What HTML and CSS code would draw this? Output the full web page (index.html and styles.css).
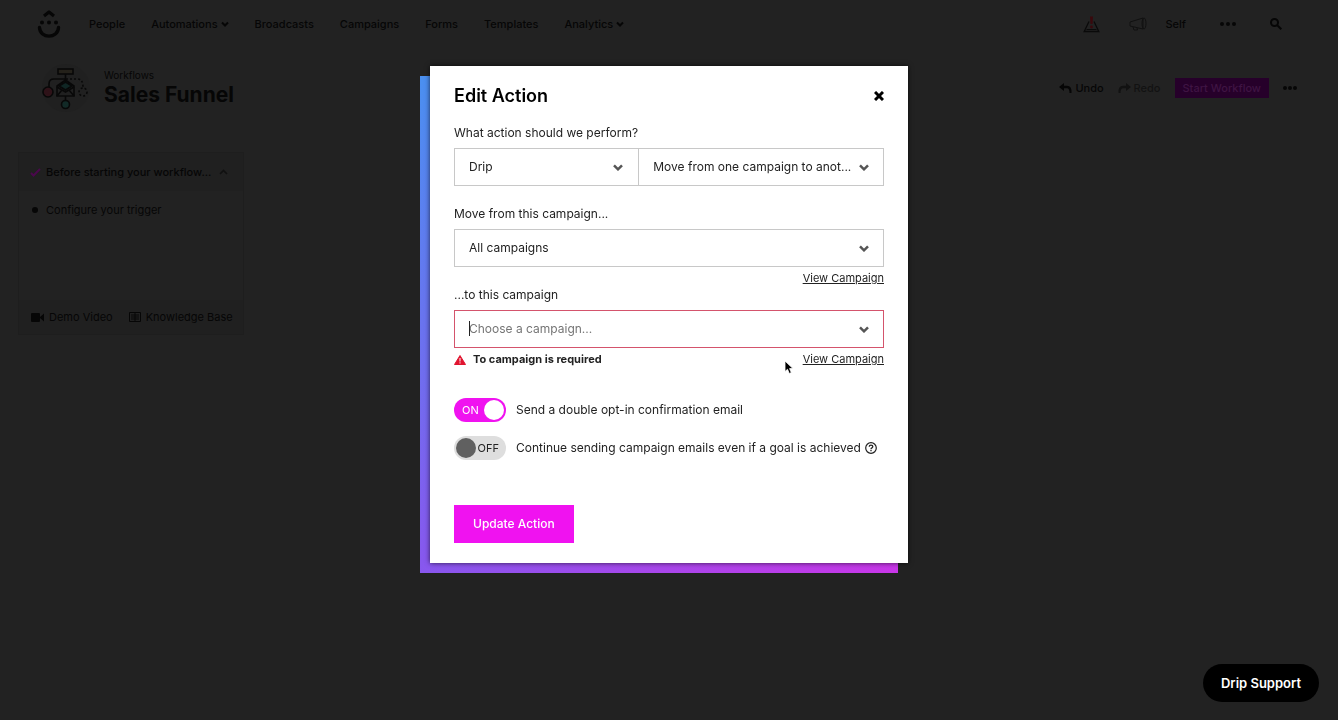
FILE: index.html
```html
<!DOCTYPE html>
<html lang="en">
<head>
    <meta charset="UTF-8">
    <meta name="viewport" content="width=device-width, initial-scale=1.0">
    <title>Sales Funnel - Workflows</title>
    <link rel="stylesheet" href="styles.css">
</head>
<body>
    <!-- Top navigation -->
    <header class="navbar">
        <a href="#" class="logo" aria-label="Home">
            <svg width="24" height="30" viewBox="0 0 24 30" fill="none" stroke="currentColor">
                <path d="M7 7 L12 3 L17 7" stroke-width="3.2" stroke-linejoin="round"/>
                <path d="M2.500 18.500 C3 30 21 30 21.500 18.500" stroke-width="3.400" stroke-linecap="round"/>
                <g fill="currentColor" stroke="none">
                    <circle cx="5" cy="13.500" r="2"/>
                    <circle cx="12" cy="13.500" r="2"/>
                    <circle cx="19" cy="13.500" r="2"/>
                </g>
            </svg>
        </a>
        <nav class="nav-links">
            <a href="#">People</a>
            <a href="#">Automations
                <svg width="8" height="6" viewBox="0 0 8 6"><path d="M1 1.500 L4 4.500 L7 1.500" fill="none" stroke="currentColor" stroke-width="2"/></svg>
            </a>
            <a href="#">Broadcasts</a>
            <a href="#">Campaigns</a>
            <a href="#">Forms</a>
            <a href="#">Templates</a>
            <a href="#">Analytics
                <svg width="8" height="6" viewBox="0 0 8 6"><path d="M1 1.500 L4 4.500 L7 1.500" fill="none" stroke="currentColor" stroke-width="2"/></svg>
            </a>
        </nav>
        <div class="nav-tools">
            <button class="icon-btn" aria-label="Alerts">
                <svg width="17" height="17" viewBox="0 0 17 17" fill="none">
                    <path d="M6 5.500 L1.200 15.500 H15.800 L11 5.500" stroke="#0a0a0a" stroke-width="1.300"/>
                    <path d="M3.500 13.500 H13.500" stroke="#0a0a0a"/>
                    <path d="M7 0.500 H10 L9.500 8 H7.500 Z" fill="#3a080c"/>
                    <circle cx="8.500" cy="11" r="1.400" fill="#3a080c"/>
                </svg>
            </button>
            <button class="icon-btn announce" aria-label="Announcements">
                <svg width="18" height="14" viewBox="0 0 18 14" fill="none" stroke="currentColor">
                    <path d="M1 5 L14 1 V12 L1 9 Z M4 10 L5 13 H8.500 L8 11"/>
                    <ellipse cx="15" cy="6.500" rx="2" ry="5.500"/>
                </svg>
            </button>
            <a href="#" class="account">Self</a>
            <button class="icon-btn more" aria-label="More">
                <svg width="16" height="4" viewBox="0 0 16 4" fill="currentColor"><circle cx="2" cy="2" r="2"/><circle cx="8" cy="2" r="2"/><circle cx="14" cy="2" r="2"/></svg>
            </button>
            <button class="icon-btn" aria-label="Search">
                <svg width="12" height="12" viewBox="0 0 12 12" fill="none" stroke="currentColor" stroke-width="2"><circle cx="4.500" cy="4.500" r="3.500"/><path d="M7 7 L11.300 11.300"/></svg>
            </button>
        </div>
    </header>

    <!-- Workflow title and actions -->
    <section class="page-head">
        <div class="workflow-icon">
            <svg width="50" height="50" viewBox="0 0 50 50" fill="none" stroke="#080808" stroke-width="1.600">
                <circle cx="25" cy="25" r="24" fill="#202020" stroke="none"/>
                <rect x="17" y="6" width="15" height="5" fill="#24211a"/>
                <path d="M24.500 11 V19 M8 24 V21 Q8 16 13 16 H24.500 M24.500 33 V37"/>
                <path d="M25 16 H36 Q42 16 42 24" stroke-dasharray="2 2"/>
                <path d="M16 23 L24.500 17 L33 23 V33 H16 Z"/>
                <path d="M18 23 L24.500 19 L31 23 L24.500 27 Z" fill="#102624"/>
                <path d="M16 24 L24.500 29 L33 24 M16 33 L21 27 M33 33 L28 27"/>
                <circle cx="7" cy="29" r="5" fill="#2e1218"/>
                <circle cx="24.500" cy="41.500" r="4" fill="#122a27"/>
                <circle cx="42" cy="29" r="4" stroke-dasharray="2 2"/>
            </svg>
        </div>
        <div class="workflow-name">
            <a href="#" class="crumb">Workflows</a>
            <h1>Sales Funnel</h1>
        </div>
        <div class="workflow-actions">
            <button class="text-btn">
                <svg width="13" height="10" viewBox="0 0 13 10"><path d="M5 0 L0 4 L5 8 V5.300 H8 Q10.500 5.300 10.500 10 H12.500 Q13 2.700 8 2.700 H5 Z" fill="currentColor"/></svg>
                Undo
            </button>
            <button class="text-btn redo">
                <svg width="13" height="10" viewBox="0 0 13 10"><path d="M8 0 L13 4 L8 8 V5.300 H5 Q2.500 5.300 2.500 10 H0.500 Q0 2.700 5 2.700 H8 Z" fill="currentColor"/></svg>
                Redo
            </button>
            <button class="start-btn">Start Workflow</button>
            <button class="icon-btn" aria-label="Workflow options">
                <svg width="14" height="4" viewBox="0 0 14 4" fill="currentColor"><circle cx="2" cy="2" r="2"/><circle cx="7" cy="2" r="2"/><circle cx="12" cy="2" r="2"/></svg>
            </button>
        </div>
    </section>

    <!-- Checklist panel -->
    <aside class="checklist">
        <div class="checklist-head">
            <svg width="11" height="9" viewBox="0 0 11 9"><path d="M1 5 L3.500 7.500 L10 1" fill="none" stroke="#4a084c" stroke-width="2"/></svg>
            <strong>Before starting your workflow...</strong>
            <svg class="collapse" width="9" height="6" viewBox="0 0 9 6"><path d="M1 5 L4.500 1.500 L8 5" fill="none" stroke="#101010" stroke-width="1.600"/></svg>
        </div>
        <ul class="checklist-body">
            <li>Configure your trigger</li>
        </ul>
        <div class="checklist-foot">
            <a href="#">
                <svg width="13" height="9" viewBox="0 0 13 9" fill="currentColor"><rect width="9" height="9" rx="1"/><path d="M9 4 L13 0.500 V8.500 L9 5 Z"/></svg>
                Demo Video
            </a>
            <a href="#">
                <svg width="12" height="10" viewBox="0 0 12 10" fill="none" stroke="currentColor"><path d="M0.500 0.500 H11.500 V9.500 H0.500 Z M2 3 H10 M2 5 H10 M2 7 H10 M6 1 V9"/></svg>
                Knowledge Base
            </a>
        </div>
    </aside>

    <!-- Edit action modal -->
    <div class="modal-wrap">
        <form class="modal" role="dialog" aria-labelledby="modal-title">
            <div class="modal-head">
                <h2 id="modal-title">Edit Action</h2>
                <button type="button" class="close-btn" aria-label="Close">
                    <svg width="10" height="10" viewBox="0 0 10 10"><path d="M1 1 L9 9 M9 1 L1 9" stroke="currentColor" stroke-width="3"/></svg>
                </button>
            </div>

            <div class="field">
                <label for="provider">What action should we perform?</label>
                <div class="select-row">
                    <div class="select provider">
                        <select id="provider"><option>Drip</option></select>
                        <svg class="chevron" width="10" height="7" viewBox="0 0 10 7"><path d="M1 1.300 L5 5.300 L9 1.300"/></svg>
                    </div>
                    <div class="select action">
                        <select aria-label="Action"><option>Move from one campaign to anot...</option></select>
                        <svg class="chevron" width="10" height="7" viewBox="0 0 10 7"><path d="M1 1.300 L5 5.300 L9 1.300"/></svg>
                    </div>
                </div>
            </div>

            <div class="field">
                <label for="from">Move from this campaign...</label>
                <div class="select">
                    <select id="from"><option>All campaigns</option></select>
                    <svg class="chevron" width="10" height="7" viewBox="0 0 10 7"><path d="M1 1.300 L5 5.300 L9 1.300"/></svg>
                </div>
                <div class="field-foot">
                    <a href="#">View Campaign</a>
                </div>
            </div>

            <div class="field">
                <label for="to">...to this campaign</label>
                <div class="select invalid">
                    <select id="to"><option>Choose a campaign...</option></select>
                    <span class="caret"></span>
                    <svg class="chevron" width="10" height="7" viewBox="0 0 10 7"><path d="M1 1.300 L5 5.300 L9 1.300"/></svg>
                </div>
                <div class="field-foot">
                    <p class="error">
                        <svg width="12" height="10" viewBox="0 0 12 10"><path d="M6 0.500 L11.500 9.500 H0.500 Z" fill="#e0142f" stroke="#e0142f" stroke-linejoin="round"/><path d="M6 3 V6.500 M6 7.300 V8.500" stroke="#fff"/></svg>
                        To campaign is required
                    </p>
                    <a href="#">View Campaign</a>
                </div>
            </div>

            <div class="toggles">
                <label class="toggle">
                    <span class="switch">
                        <input type="checkbox" checked>
                        <span class="state">ON</span>
                    </span>
                    Send a double opt-in confirmation email
                </label>
                <label class="toggle">
                    <span class="switch">
                        <input type="checkbox">
                        <span class="state">OFF</span>
                    </span>
                    Continue sending campaign emails even if a goal is achieved
                    <svg class="help" width="12" height="12" viewBox="0 0 12 12" fill="none" stroke="currentColor"><circle cx="6" cy="6" r="5.300" stroke-width="1.200"/><path d="M4.200 4.800 Q4.300 3.200 6 3.200 Q7.800 3.200 7.800 4.600 Q7.800 5.400 6.900 5.900 Q6 6.300 6 7.200 M6 8 V9.200" stroke-width="1.300"/></svg>
                </label>
            </div>

            <button type="submit" class="update-btn">Update Action</button>
        </form>
    </div>

    <button class="support-btn">Drip Support</button>

    <svg class="pointer" width="10" height="15" viewBox="0 0 10 15"><path d="M1 1 V11.500 L3.500 9.300 L5.300 13.500 L7.300 12.600 L5.600 8.600 H9 Z" fill="#000" stroke="#fff" stroke-width="0.800"/></svg>
</body>
</html>
```
FILE: styles.css
```css
* {
    box-sizing: border-box;
}

body {
    margin: 0;
    min-height: 100vh;
    background: #222;
    color: #060606;
    font-family: Inter, "Liberation Sans", sans-serif;
    font-size: 11px;
}

a {
    color: inherit;
    text-decoration: none;
}

h1, h2, p, ul {
    margin: 0;
    padding: 0;
}

button, select, input {
    font: inherit;
    color: inherit;
    margin: 0;
}

button {
    border: none;
    background: none;
    padding: 0;
    cursor: pointer;
}

svg {
    display: block;
    flex: none;
}

/* --- Navigation --- */
.navbar {
    display: flex;
    align-items: center;
    height: 48px;
    padding: 0 56px 0 37px;
    font-weight: 500;
}

.nav-links {
    display: flex;
    gap: 26px;
    margin-left: 28px;
}

.nav-links a {
    display: flex;
    align-items: center;
    gap: 3px;
}

.nav-tools {
    display: flex;
    align-items: center;
    margin-left: auto;
}

.announce {
    color: #101010;
    margin-left: 29px;
}

.account {
    margin-left: 18px;
}

.more {
    margin: 0 34px;
}

/* --- Page Header --- */
.page-head {
    display: flex;
    align-items: center;
    height: 80px;
    padding: 0 41px;
}

.workflow-name {
    margin-left: 13px;
}

.crumb {
    display: block;
    font-size: 10px;
    line-height: 14px;
}

.workflow-name h1 {
    font-size: 21px;
    font-weight: 700;
    line-height: 26px;
}

.workflow-actions {
    display: flex;
    align-items: center;
    gap: 14px;
    margin-left: auto;
}

.text-btn {
    display: flex;
    align-items: center;
    gap: 3px;
    font-weight: 500;
}

.redo {
    color: #121212;
}

.start-btn {
    height: 20px;
    padding: 0 8px;
    background: #26002a;
    color: #3f1443;
    font-weight: 500;
}

/* --- Checklist --- */
.checklist {
    width: 226px;
    margin: 24px 18px;
    border: 1px solid #1e1e1e;
}

.checklist-head {
    display: flex;
    align-items: center;
    height: 38px;
    padding: 0 15px 0 11px;
    background: #202020;
}

.checklist-head strong {
    margin-left: 5px;
    font-weight: 500;
    white-space: nowrap;
}

.collapse {
    margin-left: auto;
}

.checklist-body {
    height: 109px;
    padding: 11px;
    list-style: none;
}

.checklist-body li {
    display: flex;
    align-items: center;
    gap: 8px;
    line-height: 16px;
}

.checklist-body li::before {
    content: "";
    width: 6px;
    height: 6px;
    margin-left: 2px;
    border-radius: 50%;
    background: #060606;
}

.checklist-foot {
    display: flex;
    align-items: center;
    gap: 16px;
    height: 34px;
    padding: 0 12px;
    background: #202020;
    white-space: nowrap;
}

.checklist-foot a {
    display: flex;
    align-items: center;
    gap: 5px;
}

/* --- Modal --- */
.modal-wrap {
    position: fixed;
    inset: 0;
    display: flex;
    align-items: flex-start;
    justify-content: center;
    padding-top: 66px;
}

.modal {
    position: relative;
    width: 478px;
    padding: 18px 24px 20px;
    background: #fff;
    color: #222;
    font-size: 12px;
    line-height: 18px;
    box-shadow: 0 0 5px rgba(0, 0, 0, 0.7);
}

/* offset gradient slab under the dialog */
.modal::before {
    content: "";
    position: absolute;
    inset: 10px 10px -10px -10px;
    z-index: -1;
    background: linear-gradient(135deg, #4a90f0, #8758ee 50%, #c936e8);
}

.modal-head {
    display: flex;
    align-items: center;
    justify-content: space-between;
    margin-bottom: 16px;
    color: #000;
}

.modal-head h2 {
    font-size: 18px;
    font-weight: 600;
    line-height: 24px;
}

.field {
    margin-bottom: 19px;
}

.field:has(.field-foot) {
    margin-bottom: 0;
}

.field > label {
    display: block;
    margin-bottom: 6px;
}

.select-row {
    display: flex;
}

.select {
    position: relative;
}

.provider {
    flex: 3;
}

.action {
    flex: 4;
}

.select select {
    display: block;
    width: 100%;
    height: 38px;
    padding: 0 30px 0 14px;
    appearance: none;
    border: 1px solid #c8c8c8;
    border-radius: 0;
    background: #fff;
}

.provider select {
    border-right: none;
}

.invalid select {
    border-color: #d4546c;
    color: #757575;
}

.caret {
    position: absolute;
    top: 11px;
    left: 15px;
    width: 1px;
    height: 15px;
    background: #222;
}

.chevron {
    position: absolute;
    top: 16px;
    right: 15px;
    fill: none;
    stroke: #555;
    stroke-width: 2.5;
    pointer-events: none;
}

.field-foot {
    display: flex;
    justify-content: space-between;
    padding-top: 4px;
    font-size: 11px;
    line-height: 15px;
}

.field-foot a {
    margin-left: auto;
    text-decoration: underline;
}

.error {
    display: flex;
    align-items: center;
    gap: 7px;
    font-weight: 700;
}

/* --- Toggles --- */
.toggles {
    display: flex;
    flex-direction: column;
    gap: 14px;
    margin: 31px 0 45px;
}

.toggle {
    display: flex;
    align-items: center;
    white-space: nowrap;
}

.switch {
    display: grid;
    align-items: center;
    width: 52px;
    height: 24px;
    margin-right: 10px;
}

.switch input,
.switch .state {
    grid-area: 1 / 1;
}

.switch input {
    display: flex;
    align-items: center;
    width: 52px;
    height: 24px;
    padding: 0 2px;
    appearance: none;
    border-radius: 12px;
    background: #dedede;
}

.switch input::before {
    content: "";
    width: 20px;
    height: 20px;
    border-radius: 50%;
    background: #606060;
}

.switch input:checked {
    justify-content: flex-end;
    background: #f012f0;
}

.switch input:checked::before {
    background: #fff;
}

.state {
    z-index: 1;
    padding-right: 7px;
    font-size: 11px;
    text-align: right;
}

.switch input:checked + .state {
    padding-left: 8px;
    color: #fff;
    text-align: left;
}

.help {
    margin-left: 4px;
}

.update-btn {
    display: block;
    height: 38px;
    padding: 0 19px;
    background: #f012f0;
    color: #fff;
    font-size: 12px;
    font-weight: 500;
}

/* --- Support Button --- */
.support-btn {
    position: fixed;
    right: 19px;
    bottom: 18px;
    height: 38px;
    padding: 0 18px;
    border-radius: 19px;
    background: #000;
    color: #fff;
    font-size: 13px;
    font-weight: 600;
}

.pointer {
    position: absolute;
    top: 360px;
    left: 784px;
}
```
